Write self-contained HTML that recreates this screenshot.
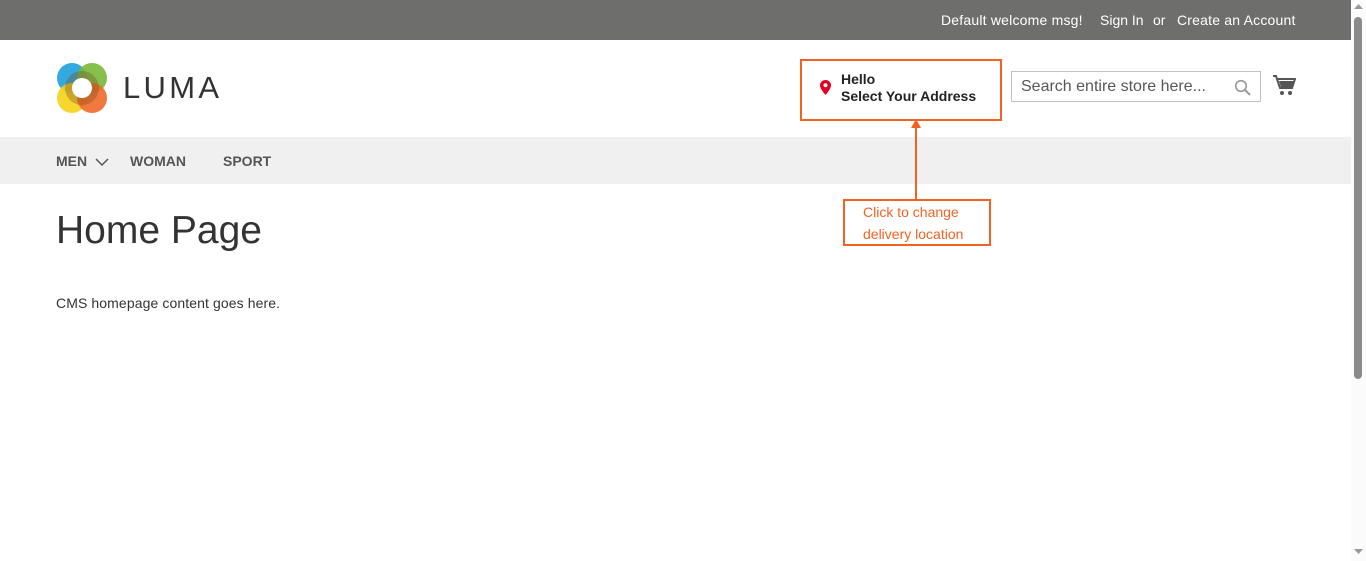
<!DOCTYPE html>
<html><head><style>
*{margin:0;padding:0;box-sizing:border-box}
body{width:1366px;height:561px;overflow:hidden;font-family:"Liberation Sans",sans-serif;color:#333;background:#fff;position:relative}
.top{position:absolute;left:0;top:0;width:1351px;height:40px;background:#6e6f6d;color:#fff;font-size:14px}
.top span{position:absolute;top:12px}
.nav{position:absolute;left:0;top:137px;width:1351px;height:47px;background:#f0f0f0;font-weight:bold;font-size:14px;color:#555}
.nav span{position:absolute;top:16px}
.abs{position:absolute}
.sb{position:absolute;left:1351px;top:0;width:15px;height:561px;background:#fbfbfb}
</style></head><body>
<div class="top"><span style="left:941px;letter-spacing:.2px">Default welcome msg!</span><span style="left:1100px">Sign In</span><span style="left:1153px">or</span><span style="left:1177px;letter-spacing:.2px">Create an Account</span></div>
<svg class="abs" style="left:56px;top:62px" width="52" height="52" viewBox="0 0 52 52">
<circle cx="16" cy="16" r="15" fill="#1ea0dc" opacity=".9"/>
<circle cx="36" cy="16" r="15" fill="#7ab83a" opacity=".9"/>
<circle cx="16" cy="36" r="15" fill="#f6d21a" opacity=".9"/>
<circle cx="36" cy="36" r="15" fill="#ef6a2a" opacity=".9"/>
<circle cx="26" cy="26" r="17" fill="#7a4a20" opacity=".35"/>
<circle cx="26" cy="26" r="10" fill="#fff"/>
</svg>
<div class="abs" style="left:123px;top:70px;font-size:31px;letter-spacing:3.3px;color:#333">LUMA</div>
<div class="abs" style="left:800px;top:59px;width:202px;height:62px;border:2px solid #f26322"></div>
<svg class="abs" style="left:820px;top:80px" width="11" height="15" viewBox="0 0 11 15"><path d="M5.5 0C2.5 0 0 2.4 0 5.4 0 9 5.5 15 5.5 15S11 9 11 5.4C11 2.4 8.5 0 5.5 0z" fill="#e6001f"/><circle cx="5.5" cy="5.3" r="2" fill="#fff"/></svg>
<div class="abs" style="left:841px;top:71px;font-size:14px;font-weight:bold;line-height:17px;color:#222">Hello<br>Select Your Address</div>
<div class="abs" style="left:1011px;top:71px;width:250px;height:31px;border:1px solid #c2c2c2;font-size:16px;color:#575757;padding:6px 9px">Search entire store here...</div>
<svg class="abs" style="left:1234px;top:79px" width="17" height="17" viewBox="0 0 17 17"><circle cx="7" cy="7" r="5.3" fill="none" stroke="#999" stroke-width="1.6"/><path d="M11 11l5 5" stroke="#999" stroke-width="2"/></svg>
<svg class="abs" style="left:1273px;top:75px" width="23" height="21" viewBox="0 0 23 21"><path d="M0 1h3l4 12h12l3-9H5" fill="none" stroke="#555" stroke-width="2"/><path d="M6 6h15l-2 6H8z" fill="#555"/><circle cx="9" cy="18" r="2" fill="#555"/><circle cx="17" cy="18" r="2" fill="#555"/></svg>
<div class="nav"><span style="left:56px">MEN</span><svg class="abs" style="left:95px;top:21px" width="14" height="9"><path d="M1 1l6 6 6-6" fill="none" stroke="#555" stroke-width="1.5"/></svg><span style="left:130px">WOMAN</span><span style="left:223px">SPORT</span></div>
<div class="abs" style="left:915px;top:124px;width:2px;height:76px;background:#f26322"></div>
<svg class="abs" style="left:910px;top:119px" width="12" height="10"><path d="M6 0l5 9H1z" fill="#f26322"/></svg>
<div class="abs" style="left:843px;top:199px;width:148px;height:47px;border:2px solid #f26322;font-size:14px;color:#f26322;line-height:22px;padding-left:18px;padding-top:0px">Click to change<br>delivery location</div>
<div class="abs" style="left:56px;top:209px;font-size:39px;font-weight:300;color:#333">Home Page</div>
<div class="abs" style="left:56px;top:295px;font-size:14px;letter-spacing:.1px">CMS homepage content goes here.</div>
<div class="sb"><div style="position:absolute;left:3px;top:17px;width:8px;height:362px;background:#8a8a8a;border-radius:4px"></div>
<svg style="position:absolute;left:3px;top:4px" width="9" height="6"><path d="M4.5 0L9 5H0z" fill="#999"/></svg>
<svg style="position:absolute;left:3px;top:549px" width="9" height="6"><path d="M0 0h9L4.5 5z" fill="#999"/></svg></div>
</body></html>
